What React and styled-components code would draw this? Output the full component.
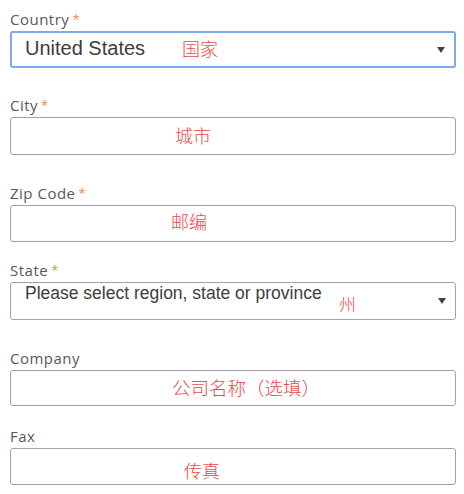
import React from 'react'
import styled, { createGlobalStyle } from 'styled-components'

const GlobalStyle = createGlobalStyle`
  body {
    margin: 0;
    background: #fff;
  }
`;

const Form = styled.div`
  padding: 9px 8px 0 10px;
  display: flex;
  flex-direction: column;
`;

const Field = styled.div`
  display: flex;
  flex-direction: column;
  margin-bottom: ${({ gap }) => gap}px;
`;

const Label = styled.div`
  font-family: "Open Sans", sans-serif;
  font-size: 15px;
  line-height: 20px;
  letter-spacing: 0.5px;
  color: #5b5660;
  margin-bottom: 2px;
  span {
    font-size: 13px;
    color: #f0883a;
    margin-left: 3px;
    vertical-align: 1px;
  }
`;

const Box = styled.div`
  position: relative;
  box-sizing: border-box;
  height: ${({ h }) => h || 37}px;
  border: ${({ focused }) => (focused ? '2px solid #80a8ec' : '1px solid #a89ea8')};
  border-radius: 3px;
  background: #fff;
`;

const Value = styled.div`
  font-family: "Liberation Sans", Arial, sans-serif;
  font-size: ${({ size }) => size}px;
  line-height: 1;
  color: #3d3d3d;
  padding: ${({ top }) => top}px 0 0 ${({ left }) => left}px;
  white-space: nowrap;
`;

const Arrow = styled.div`
  position: absolute;
  right: 9px;
  top: 50%;
  margin-top: -3px;
  width: 0;
  height: 0;
  border-left: 4px solid transparent;
  border-right: 4px solid transparent;
  border-top: 6px solid #444;
`;

const Note = styled.div`
  position: absolute;
  left: ${({ x }) => x}px;
  top: ${({ y }) => y}px;
  font-family: "Noto Sans CJK SC", sans-serif;
  font-size: ${({ size }) => size || 18}px;
  font-weight: 300;
  line-height: 1;
  color: #ee4848;
  white-space: nowrap;
`;

const App = () => {
  return (
    <>
      <GlobalStyle />
      <Form>
        <Field gap={27}>
          <Label>Country<span>*</span></Label>
          <Box focused>
            <Value size={20} top={5} left={13}>United States</Value>
            <Note x={170} y={6}>国家</Note>
            <Arrow />
          </Box>
        </Field>
        <Field gap={28}>
          <Label>City<span>*</span></Label>
          <Box h={38}>
            <Note x={164} y={8}>城市</Note>
          </Box>
        </Field>
        <Field gap={18}>
          <Label>Zip Code<span>*</span></Label>
          <Box h={37}>
            <Note x={160} y={6}>邮编</Note>
          </Box>
        </Field>
        <Field gap={28}>
          <Label>State<span>*</span></Label>
          <Box h={38}>
            <Value size={17.5} top={2} left={14}>Please select region, state or province</Value>
            <Note x={328} y={12} size={17}>州</Note>
            <Arrow />
          </Box>
        </Field>
        <Field gap={20}>
          <Label>Company</Label>
          <Box h={36}>
            <Note x={161} y={7} size={18.5}>公司名称（选填）</Note>
          </Box>
        </Field>
        <Field gap={0}>
          <Label>Fax</Label>
          <Box h={37}>
            <Note x={173} y={12}>传真</Note>
          </Box>
        </Field>
      </Form>
    </>
  )
}

export default App
